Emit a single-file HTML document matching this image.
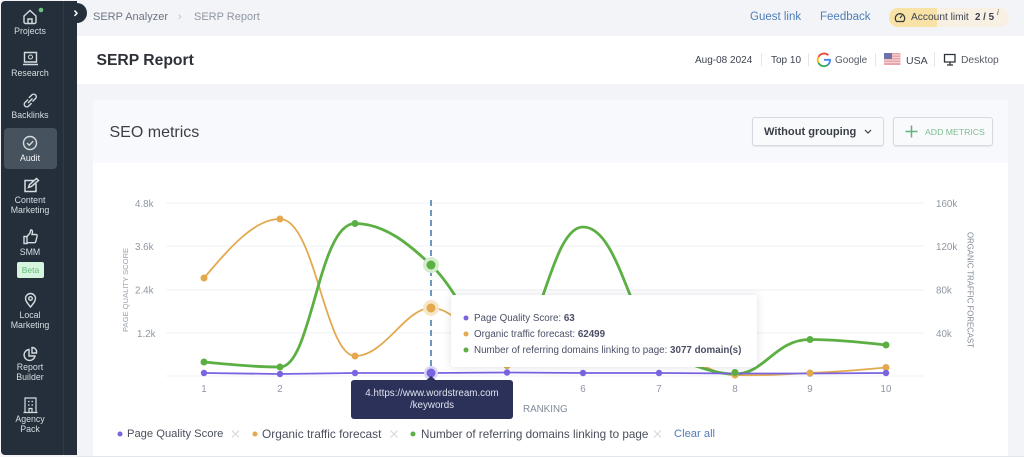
<!DOCTYPE html>
<html><head><meta charset="utf-8"><style>
html,body{margin:0;padding:0}
body{width:1024px;height:457px;overflow:hidden;position:relative;background:#f2f4f8;font-family:"Liberation Sans",sans-serif;color:#3c4250}
.t{position:absolute;white-space:nowrap;line-height:1}
.n{position:absolute;left:0;width:60px;text-align:center;color:#d8dde3;font-size:8.800px;line-height:10px}
.c{position:absolute;left:0;top:0}
</style></head><body>
<div style="position:absolute;left:77px;top:36px;width:947px;height:48px;background:#fff"></div>
<div style="position:absolute;left:93px;top:100px;width:915px;height:63px;background:#f8f9fc"></div>
<div style="position:absolute;left:93px;top:163px;width:915px;height:293px;background:#fff"></div>
<div style="position:absolute;left:77px;top:456px;width:947px;height:1px;background:#e3e6ea"></div>

<div style="position:absolute;left:1px;top:1px;width:76px;height:454px;background:#242f3b;border-radius:4px 0 0 4px"></div>
<div style="position:absolute;left:63px;top:1px;width:1px;height:454px;background:#303b47"></div>
<div style="position:absolute;left:4px;top:128px;width:53px;height:41px;background:#46535f;border-radius:4px"></div>
<div style="position:absolute;left:67px;top:3px;width:20px;height:20px;border-radius:50%;background:#242f3b"></div>

<svg class="c" width="90" height="457" fill="none" stroke="#d5dadf" stroke-width="1.400">
<path d="M74.500 10.500l2.500 2.700-2.500 2.700" stroke="#fff" stroke-width="1.500"/>
<path d="M24 16l6-5.500 6 5.500v6a1.500 1.500 0 0 1-1.500 1.500h-9a1.500 1.500 0 0 1-1.500-1.500zM28 23.500v-4.500h4v4.500"/>
<circle cx="41" cy="10" r="2.300" fill="#6fc27a" stroke="none"/>
<path d="M24.500 52.500h12v9.500h-12zM23 64.500h15"/><circle cx="30.500" cy="57" r="2" stroke-width="1"/>
<path d="M28 99.500l-3 3a2.500 2.500 0 0 0 3.600 3.600l3-3M32.500 101.500l3-3a2.500 2.500 0 0 0-3.600-3.600l-3 3M28 103l4.500-4.500"/>
<circle cx="30" cy="143" r="6.500"/><path d="M27 143l2.200 2.200 4-4"/>
<path d="M34 180.500h-9v11h11v-8M28.500 187.500l1-3 7-6 2 2-7 6z" stroke-width="1.500"/>
<path d="M24 236.500h3v7h-3zM27 236.500l3-3.500.7-3c1.800-.3 2.300 1.500 1.300 4.500h4c1 0 1.300.8 1.100 1.500l-1.300 5.500c-.2.8-.7 1.200-1.400 1.200H27"/>
<path d="M30.500 307c-3-3.500-5-6-5-8.500a5 5 0 0 1 10 0c0 2.500-2 5-5 8.500z"/><circle cx="30.500" cy="298.500" r="1.800"/>
<path d="M29 349.500a5.500 5.500 0 1 0 6 6.500h-6z"/><path d="M32 347.500a4.500 4.500 0 0 1 4.500 5.500h-4.500z"/>
<path d="M25 398h11v14.500H25zM23.500 412.500h14M28 401.500h1.500M31.500 401.500H33M28 405h1.500M31.500 405H33M29 412.500v-4h3v4" stroke-width="1.200"/>
</svg>
<div class="n" style="top:26px">Projects</div>
<div class="n" style="top:68px">Research</div>
<div class="n" style="top:110px">Backlinks</div>
<div class="n" style="top:153px;color:#f2f4f6">Audit</div>
<div class="n" style="top:195px">Content<br>Marketing</div>
<div class="n" style="top:247px">SMM</div>
<div style="position:absolute;left:17px;top:262px;width:27px;height:16px;background:#d6f5df;border-radius:2px;color:#5fbb78;font-size:8.500px;line-height:16px;text-align:center">Beta</div>
<div class="n" style="top:310px">Local<br>Marketing</div>
<div class="n" style="top:362px">Report<br>Builder</div>
<div class="n" style="top:414px">Agency<br>Pack</div>

<div class="t" style="left:93px;top:12px;font-size:11px;color:#6c7480">SERP Analyzer</div>
<div class="t" style="left:178px;top:12px;font-size:11px;color:#b8bdc6">›</div>
<div class="t" style="left:194px;top:12px;font-size:11px;color:#8f96a1">SERP Report</div>
<div class="t" style="left:750px;top:12px;font-size:11.500px;color:#4f7eb8">Guest link</div>
<div class="t" style="left:820px;top:12px;font-size:11.500px;color:#4f7eb8">Feedback</div>
<div style="position:absolute;left:889px;top:8px;width:120px;height:19px;background:#f8f1e3;border-radius:9px;overflow:hidden"><div style="width:48px;height:19px;background:#f8e2a5"></div></div>
<svg class="c" width="1024" height="100" fill="none"><path d="M896.500 21.500a4.700 4.700 0 1 1 7 0z" stroke="#34393f" stroke-width="1.300"/><path d="M900 18l2-2.500" stroke="#34393f" stroke-width="1.200"/></svg>
<div class="t" style="left:911px;top:13px;font-size:10.200px;color:#3c4250">Account limit</div>
<div class="t" style="left:975px;top:13px;font-size:9.800px;font-weight:bold;color:#3c4250">2 / 5</div>
<div class="t" style="left:997px;top:9px;font-size:8px;font-style:italic;color:#555">i</div>

<div class="t" style="left:96.500px;top:53px;font-size:15.700px;font-weight:bold;color:#2e3238">SERP Report</div>
<div class="t" style="left:695px;top:56px;font-size:10px;color:#3c4250">Aug-08 2024</div>
<div class="t" style="left:771px;top:56px;font-size:10px;color:#3c4250">Top 10</div>
<div class="t" style="left:835px;top:56px;font-size:10px;color:#565b66">Google</div>
<div class="t" style="left:906px;top:56px;font-size:10.500px;color:#3c4250">USA</div>
<div class="t" style="left:961px;top:56px;font-size:10.300px;color:#565b66">Desktop</div>
<svg class="c" width="1024" height="100" fill="none">
<path d="M761.500 53v13M808.500 53v13M875.500 53v13M934.500 52v15" stroke="#e4e6ea"/>
<path d="M828.400 55.200a6.400 6.400 0 0 0-10 1.800" stroke="#ea4335" stroke-width="1.800"/>
<path d="M818.400 57a6.400 6.400 0 0 0 0 5.800" stroke="#fbbc05" stroke-width="1.800"/>
<path d="M818.400 62.800a6.400 6.400 0 0 0 9.600 2" stroke="#34a853" stroke-width="1.800"/>
<path d="M828 64.800a6.400 6.400 0 0 0 2-5h-6" stroke="#4285f4" stroke-width="1.800"/>
<rect x="884" y="53" width="16.500" height="12" fill="#e9a5ab"/>
<path d="M884 55h16.500M884 57.500h16.500M884 60h16.500M884 62.500h16.500" stroke="#f7e6e8" stroke-width=".8"/>
<rect x="884" y="53" width="8" height="6" fill="#6d73a8"/>
<path d="M944.500 54.500h10.500v7.500h-10.500zM950 62v2.500M947 65h6" stroke="#2c3138" stroke-width="1.300"/>
</svg>

<div class="t" style="left:109.500px;top:124.500px;font-size:16px;color:#3a3f47">SEO metrics</div>
<div style="position:absolute;left:752px;top:117px;width:130px;height:27px;border:1px solid #d6d9e2;border-radius:3px;background:#f9fafc;box-shadow:0 1px 1px #e6e8ee"></div>
<div class="t" style="left:764px;top:126.500px;font-size:11.100px;font-weight:bold;color:#3a3f47">Without grouping</div>
<div style="position:absolute;left:893px;top:117px;width:98px;height:27px;border:1px solid #d6d9e2;border-radius:3px;background:#f9fafc;box-shadow:0 1px 1px #e6e8ee"></div>
<div class="t" style="left:925px;top:128px;font-size:8.700px;color:#7dbd92">ADD METRICS</div>
<svg class="c" width="1024" height="200" fill="none"><path d="M865 130l3 3 3-3" stroke="#3a3f47" stroke-width="1.200"/><path d="M911.500 125.500v12M905.500 131.500h12" stroke="#62b17e" stroke-width="1.500"/></svg>

<svg class="c" width="1024" height="457" fill="none" font-family="Liberation Sans, sans-serif">
<path d="M166 203h758M166 246h758M166 290h758M166 333h758M166 376h758" stroke="#eef0f3"/>
<g fill="#8f97a3" font-size="9.800">
<text x="135" y="207">4.8k</text><text x="135" y="250">3.6k</text><text x="135" y="293.500">2.4k</text><text x="137" y="337">1.2k</text>
<text x="936" y="207">160k</text><text x="936" y="250">120k</text><text x="936" y="293.500">80k</text><text x="936" y="337">40k</text>
<text x="204" y="392" text-anchor="middle">1</text><text x="280" y="392" text-anchor="middle">2</text><text x="583" y="392" text-anchor="middle">6</text><text x="659" y="392" text-anchor="middle">7</text><text x="735" y="392" text-anchor="middle">8</text><text x="810" y="392" text-anchor="middle">9</text><text x="886" y="392" text-anchor="middle">10</text>
</g>
<text transform="translate(128,332) rotate(-90)" fill="#9aa2ad" font-size="7.600">PAGE QUALITY SCORE</text>
<text transform="translate(967.500,232) rotate(90)" fill="#7f8893" font-size="7.800">ORGANIC TRAFFIC FORECAST</text>
<text x="523" y="412" fill="#7f8b99" font-size="9.800">RANKING</text>

<path d="M204 278C232 245 255 219 280 219C315 219 325 356 355 356C385 356 405 308 431 308C465 308 480 365 507 365C540 365 555 330 583 330C615 330 640 340 659 345C690 355 710 375 735 375C765 376 785 374 810 373C835 372 860 370 886 367.500" stroke="#e3a94f" stroke-width="1.800"/>
<path d="M204 362C230 364.500 255 367 280 367C312 367 318 223.500 355 223.500C385 223.500 410 245 431 265C462 294 478 352 507 352C540 352 550 227 583 227C622 227 632 345 672 358C700 367 715 374 735 374C765 374 775 339.500 810 339.500C835 339.500 860 342 886 345" stroke="#5cb043" stroke-width="2.800"/>
<path d="M204 373L280 374L355 373L431 373L507 372.500L583 373L659 373L735 373.500L810 373.500L886 373" stroke="#7a63e0" stroke-width="1.800"/>
<path d="M431 200V376" stroke="#3f76b0" stroke-width="1.500" stroke-dasharray="6 4"/>
<g fill="#7a63e0"><circle cx="735" cy="373.500" r="3.200"/><circle cx="810" cy="373.500" r="3.200"/></g>
<g fill="#e3a94f"><circle cx="204" cy="278" r="3.500"/><circle cx="280" cy="219" r="3.500"/><circle cx="355" cy="356" r="3.500"/><circle cx="431" cy="308" r="8" fill="#f8e6c8"/><circle cx="431" cy="308" r="4.500"/><circle cx="507" cy="365" r="4"/><circle cx="735" cy="375" r="3.500"/><circle cx="810" cy="373" r="3.500"/><circle cx="886" cy="367.500" r="3.500"/></g>
<g fill="#5cb043"><circle cx="204" cy="362" r="3.500"/><circle cx="280" cy="367" r="3.500"/><circle cx="355" cy="223.500" r="3.500"/><circle cx="431" cy="265" r="8" fill="#d4edcc"/><circle cx="431" cy="265" r="4.500"/><circle cx="735" cy="372.500" r="3.500"/><circle cx="810" cy="339.500" r="3.500"/><circle cx="886" cy="345" r="3.500"/></g>
<g fill="#7a63e0"><circle cx="204" cy="373" r="3.200"/><circle cx="280" cy="374" r="3.200"/><circle cx="355" cy="373" r="3.200"/><circle cx="431" cy="373" r="7" fill="#dcd6f6"/><circle cx="431" cy="373" r="4.500"/><circle cx="507" cy="372.500" r="3.200"/><circle cx="583" cy="373" r="3.200"/><circle cx="659" cy="373" r="3.200"/><circle cx="886" cy="373" r="3.200"/></g>
</svg>

<div style="position:absolute;left:451px;top:295px;width:306px;height:72px;background:#fff;border-radius:3px;box-shadow:0 0 8px rgba(70,80,100,.18)"></div>
<svg class="c" width="1024" height="457">
<circle cx="466" cy="318" r="2.500" fill="#7a63e0"/><circle cx="466" cy="334" r="2.500" fill="#e3a94f"/><circle cx="466" cy="350" r="2.500" fill="#5cb043"/>
<path d="M431 376l5 4.500h-10z" fill="#2b3158"/>
<circle cx="120" cy="434" r="2.500" fill="#7a63e0"/><circle cx="255" cy="434" r="2.500" fill="#e3a94f"/><circle cx="413" cy="434" r="2.500" fill="#5cb043"/>
<path d="M232 430.500l7 7M239 430.500l-7 7M390.500 430.500l7 7M397.500 430.500l-7 7M654 430.500l7 7M661 430.500l-7 7" stroke="#d3d7dc" stroke-width="1"/>
</svg>
<div class="t" style="left:474px;top:313.500px;font-size:9.800px;color:#4a4f66">Page Quality Score: <b>63</b></div>
<div class="t" style="left:474px;top:329.500px;font-size:9.800px;color:#4a4f66">Organic traffic forecast: <b>62499</b></div>
<div class="t" style="left:474px;top:345.500px;font-size:9.800px;color:#4a4f66">Number of referring domains linking to page: <b>3077 domain(s)</b></div>

<div style="position:absolute;left:351px;top:380px;width:162px;height:39px;background:#2b3158;border-radius:3px;color:#dfe2ee;font-size:9.800px;line-height:12px;text-align:center;padding-top:8px;box-sizing:border-box">4.https://www.wordstream.com<br>/keywords</div>

<div class="t" style="left:127px;top:429px;font-size:11.200px;color:#4a4f5c">Page Quality Score</div>
<div class="t" style="left:262px;top:429px;font-size:11.900px;color:#4a4f5c">Organic traffic forecast</div>
<div class="t" style="left:421px;top:429px;font-size:11.700px;color:#4a4f5c">Number of referring domains linking to page</div>
<div class="t" style="left:674px;top:429px;font-size:11.200px;color:#4f7eb8">Clear all</div>
</body></html>
